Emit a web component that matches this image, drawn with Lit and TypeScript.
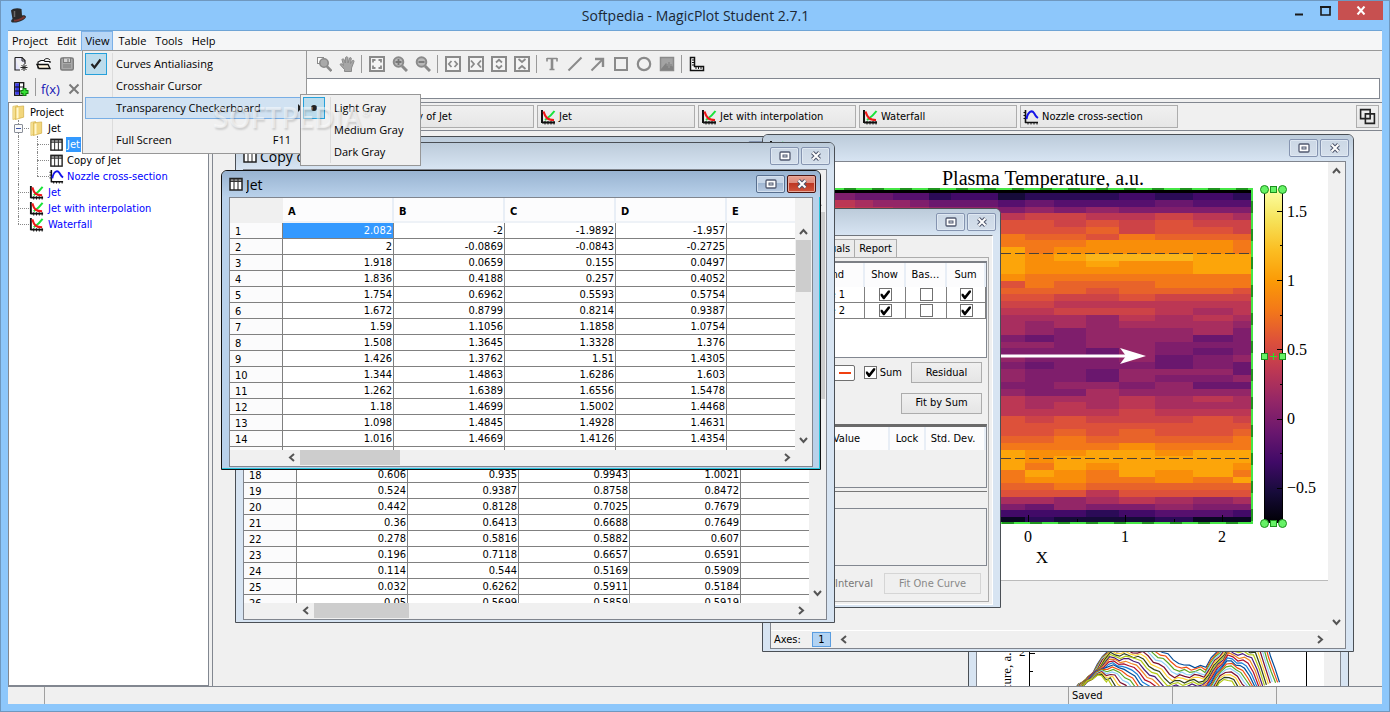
import { LitElement, html, svg, css, nothing, TemplateResult } from "lit";
import { customElement, property } from "lit/decorators.js";
import { styleMap } from "lit/directives/style-map.js";

/* ---------- data ---------- */

const JET_ROWS: string[][] = [
  ["2.082", "-2", "-1.9892", "-1.957"],
  ["2", "-0.0869", "-0.0843", "-0.2725"],
  ["1.918", "0.0659", "0.155", "0.0497"],
  ["1.836", "0.4188", "0.257", "0.4052"],
  ["1.754", "0.6962", "0.5593", "0.5754"],
  ["1.672", "0.8799", "0.8214", "0.9387"],
  ["1.59", "1.1056", "1.1858", "1.0754"],
  ["1.508", "1.3645", "1.3328", "1.376"],
  ["1.426", "1.3762", "1.51", "1.4305"],
  ["1.344", "1.4863", "1.6286", "1.603"],
  ["1.262", "1.6389", "1.6556", "1.5478"],
  ["1.18", "1.4699", "1.5002", "1.4468"],
  ["1.098", "1.4845", "1.4928", "1.4631"],
  ["1.016", "1.4669", "1.4126", "1.4354"],
  ["0.934", "1.3561", "1.3402", "1.3277"],
];

const COPY_ROWS: string[][] = [
  ...JET_ROWS.slice(1),
  ["0.852", "1.2432", "1.2518", "1.2604"],
  ["0.77", "1.1207", "1.1439", "1.1822"],
  ["0.688", "1.0244", "1.0611", "1.0933"],
  ["0.606", "0.935", "0.9943", "1.0021"],
  ["0.524", "0.9387", "0.8758", "0.8472"],
  ["0.442", "0.8128", "0.7025", "0.7679"],
  ["0.36", "0.6413", "0.6688", "0.7649"],
  ["0.278", "0.5816", "0.5882", "0.607"],
  ["0.196", "0.7118", "0.6657", "0.6591"],
  ["0.114", "0.544", "0.5169", "0.5909"],
  ["0.032", "0.6262", "0.5911", "0.5184"],
  ["-0.05", "0.5699", "0.5859", "0.5919"],
];

/* ---------- icons ---------- */

const icon = (body: unknown, size = 16) => html`<svg
  width=${size} height=${size} viewBox="0 0 16 16" aria-hidden="true">${body}</svg>`;

const G = "#8a8a8a";

const tableIcon = () => icon(svg`
  <rect x="2" y="2" width="12" height="12" fill="#fff"/>
  <rect x="2" y="2" width="12" height="3" fill="#8f8f8f"/>
  <path d="M2 5.500H14M6 3V14M10 3V14" stroke="#333" stroke-width="1.1" fill="none"/>
  <rect x="2" y="2.500" width="12" height="11.500" fill="none" stroke="#222" stroke-width="1.500"/>`);

const plotIcon = () => icon(svg`
  <path d="M2 1V14M2 13.5H15" stroke="#111" stroke-width="2" fill="none"/>
  <path d="M5 15.500V12M8 15.500V12M11 15.500V12M14 15.500V12" stroke="#111" stroke-width="1"/>
  <path d="M5 11C8 9 11 7 14.500 2" stroke="#19e33a" stroke-width="2" fill="none"/>
  <path d="M3.500 2.500C5.500 9 7.500 11 14 11" stroke="#f01818" stroke-width="2.2" fill="none"/>`);

const curveIcon = () => icon(svg`
  <path d="M2.500 1V14M2 13.500H15" stroke="#111" stroke-width="1.6" fill="none"/>
  <path d="M0.500 3.500H2M0.500 6.500H2M0.500 9.500H2M5 15.500V13M8 15.500V13M11 15.500V13M14 15.500V13" stroke="#111" stroke-width="1"/>
  <path d="M3.500 10C5 2 9 1 11 4S12.500 7.500 15 9" stroke="#1414e8" stroke-width="2" fill="none"/>`);

const folderIcon = () => icon(svg`
  <path d="M2 1.500L7 .500V14L2 15.500Z" fill="#fbe9a4" stroke="#d8b64c" stroke-width=".7"/>
  <path d="M4.500 2L13.500 1V13L4.500 15.500Z" fill="#f2d67c" stroke="#d0a93c" stroke-width=".7"/>
  <path d="M6 3L8 2.700V14L6 14.500Z" fill="#fff7cf"/>`);

const newIcon = () => icon(svg`
  <path d="M2 1.500H9L12 4.500V8M2 1.500V14H7" fill="#e4e4fa" stroke="#222" stroke-width="1.2"/>
  <path d="M9 1.500V5H12" fill="none" stroke="#222"/>
  <path d="M11 8V15M7.500 11.500H14.500M8.500 9L13.500 14M13.500 9L8.500 14" stroke="#222" stroke-width="1"/>`);

const openIcon = () => icon(svg`
  <path d="M2 12.500V6L5 4.500H8L9 5.500H14V7" fill="#fff" stroke="#111" stroke-width="1.200"/>
  <path d="M8 4C10 2 12 2 14 4" fill="none" stroke="#111"/>
  <path d="M1 8.500H12L14 12.500H3Z" fill="#fff6e0" stroke="#111" stroke-width="1.300"/>`);

const saveIcon = () => icon(svg`
  <rect x="1.700" y="2" width="12.600" height="12" rx="1.500" fill="#a9a9a9" stroke="#7c7c7c" stroke-width="1.400"/>
  <rect x="4.500" y="2" width="7" height="4.500" fill="#d5d5d5" stroke="#7c7c7c"/>
  <path d="M9 3V6M4 9H12M4 11H12" stroke="#7c7c7c" stroke-width="1.200"/>`);

const addColumnIcon = () => icon(svg`
  <rect x="1.700" y="1.700" width="9" height="12.600" fill="#fff" stroke="#111" stroke-width="1.300"/>
  <rect x="2.300" y="2.300" width="3.700" height="11.400" fill="#3838e8"/>
  <path d="M6.500 2V14M2 6H11M2 10H11" stroke="#111"/>
  <path d="M11.500 7V15M7.500 11H15.500" stroke="#117a11" stroke-width="4"/>
  <path d="M11.500 8V14M8.500 11H14.500" stroke="#35e035" stroke-width="2"/>`);

const crossIcon = () => icon(svg`<path d="M3.500 3.500L12.500 12.500M12.500 3.500L3.500 12.500" stroke="#7a7a7a" stroke-width="2"/>`);

const loupe = (mark: unknown) => svg`
  <circle cx="6.500" cy="6" r="4.800" fill="#b9b9b9" stroke="${G}" stroke-width="2"/>
  <path d="M10 10L15 15" stroke="${G}" stroke-width="3"/>${mark}`;

const frame = (d: string) => icon(svg`
  <rect x="1" y="1" width="14" height="14" fill="#f4f4f4" stroke="${G}" stroke-width="2"/>
  <path d="${d}" fill="none" stroke="${G}" stroke-width="1.800"/>`);

const TOOLS: Array<[string, TemplateResult] | null> = [
  ["Zoom region", icon(svg`
    <rect x="1.500" y="1.500" width="6" height="6" fill="#fff" stroke="${G}"/>
    <circle cx="8" cy="7" r="4.200" fill="#a9a9a9" stroke="${G}" stroke-width="1.600"/>
    <path d="M11 10.500L15.500 15" stroke="${G}" stroke-width="2.600"/>`)],
  ["Pan", icon(svg`
    <path d="M1 8.500C2 7 3.500 8 4.500 9.500L3 3.500C3.500 2.500 4.700 2.600 5 3.500L6.300 7L6.500 1.500C7 .500 8.500 .500 8.800 1.500L9 7L10.500 2C11 1.200 12.300 1.500 12.300 2.500L11.500 7.500L13.500 4.500C14.200 4 15.300 4.500 15 5.500L12.500 12V15.500H5.500V13.500Z" fill="#a6a6a6" stroke="${G}"/>`)],
  null,
  ["Fit all", frame("M4 6.500V4H6.500M9.500 4H12V6.500M12 9.500V12H9.500M6.500 12H4V9.500")],
  ["Zoom in", icon(loupe(svg`<path d="M3.500 6H9.500M6.500 3V9" stroke="#777" stroke-width="1.800"/>`))],
  ["Zoom out", icon(loupe(svg`<path d="M3.500 6H9.500" stroke="#777" stroke-width="1.800"/>`))],
  null,
  ["Expand horizontally", frame("M6.500 5L3.800 8L6.500 11M9.500 5L12.200 8L9.500 11")],
  ["Shrink horizontally", frame("M3 4.500L6 8L3 11.500M13 4.500L10 8L13 11.500")],
  ["Expand vertically", frame("M5 6.500L8 3.800L11 6.500M5 9.500L8 12.200L11 9.500")],
  ["Shrink vertically", frame("M4.500 3L8 6L11.500 3M4.500 13L8 10L11.500 13")],
  null,
  ["Text", icon(svg`<path d="M3 2.500H13M3 2V5.500M13 2V5.500M5.500 13.500H10.500" stroke="${G}" stroke-width="1.600" fill="none"/><path d="M8 2V14" stroke="${G}" stroke-width="2.600"/>`)],
  ["Line", icon(svg`<path d="M1.500 14.500L14.500 1.500" stroke="${G}" stroke-width="2"/>`)],
  ["Arrow", icon(svg`<path d="M1.500 14.500L12 4" stroke="${G}" stroke-width="2"/><path d="M5 3H13V11" stroke="${G}" stroke-width="2.400" fill="none"/>`)],
  ["Rectangle", icon(svg`<rect x="2" y="2" width="12" height="12" fill="none" stroke="${G}" stroke-width="2"/>`)],
  ["Ellipse", icon(svg`<circle cx="8" cy="8" r="6.200" fill="none" stroke="${G}" stroke-width="2.200"/>`)],
  ["Image", icon(svg`
    <rect x="1.500" y="1.500" width="13" height="13" fill="#a3a3a3" stroke="${G}" stroke-width="1.500"/>
    <path d="M2 13L7 7L10 10L12 8L14 11V14H2Z" fill="#828282"/>
    <path d="M10 6V12M7.500 9H13" stroke="#909090" stroke-width="2"/>`)],
  null,
  ["Axes", icon(svg`
    <path d="M1.500 1.500H5.500V10.500H14.500V14.500H1.500Z" fill="#fff" stroke="#111" stroke-width="1.500"/>
    <path d="M3 4H5M3 6.500H5M3 9H5M7 11V13M9.500 11V13M12 11V13" stroke="#111"/>`)],
];

type Dir = "up" | "down" | "left" | "right";
const CHEVRONS: Record<Dir, string> = {
  up: "M1 7L4.500 3L8 7",
  down: "M1 2L4.500 6L8 2",
  left: "M7 1L3 4.500L7 8",
  right: "M2 1L6 4.500L2 8",
};
const chevron = (d: Dir) => html`<svg width="9" height="9" viewBox="0 0 9 9" aria-hidden="true">
  <path d=${CHEVRONS[d]} fill="none" stroke="#555" stroke-width="2"/></svg>`;

const base = css`
  :host {
    --ui: "DejaVu Sans Condensed", "Noto Sans", sans-serif;
    --menu: "Open Sans", "Noto Sans", sans-serif;
    font: 11px/16px var(--ui);
    color: #000;
  }
  * { box-sizing: border-box; }
  button, input { font: inherit; color: inherit; margin: 0; }
  svg { display: block; flex: none; }
`;

/* ---------- document window ---------- */

@customElement("mdi-window")
class MdiWindow extends LitElement {
  @property() heading = "";
  @property({ attribute: false }) glyph: TemplateResult | typeof nothing = nothing;
  @property({ type: Boolean, reflect: true }) active = false;
  @property({ type: Boolean, reflect: true }) plain = false;

  static styles = [base, css`
    :host {
      display: flex; flex-direction: column;
      border: 1px solid #4a4f55; border-radius: 6px 6px 0 0;
      background: #d7e4f2; padding: 0 7px 2px; overflow: hidden;
    }
    :host([active]) { border-color: #111; background: #b9d1ea; box-shadow: inset -1px -1px #29c4dc; }
    header {
      display: flex; align-items: center; gap: 2px; flex: none;
      height: 26px; margin: 0 -7px; padding: 0 4px 0 6px;
      background: linear-gradient(#bccbda, #d7e4f2);
    }
    :host([active]) header { background: linear-gradient(#98b3d1, #b9d1ea); }
    h2 { flex: 1; margin: 0; padding-top: 1px; font: 14px/20px var(--menu); white-space: nowrap; overflow: hidden; }
    .buttons { display: flex; gap: 2px; }
    button {
      display: grid; place-items: center; width: 29px; height: 18px; padding: 0;
      border: 1px solid #8594b0; border-radius: 2px;
      background: linear-gradient(#cbd7e5, #d5dfeb);
      box-shadow: inset 0 0 0 1px #dfe8f2;
    }
    :host([active]) button { border-color: #586f8f; background: linear-gradient(#c7d6e8 0 45%, #9fb6d2 45%, #b9cbe2); box-shadow: inset 0 0 0 1px #d5e1ef; }
    :host([active]) .close { border-color: #4b1410; background: linear-gradient(#e5a091, #dd8a7b 45%, #bd3622 45%, #d0553c); box-shadow: inset 0 0 0 1px #e8a99b; }
    .content { flex: 1; min-height: 0; display: flex; flex-direction: column; border: 1px solid #80858e; background: #f0f0f0; overflow: hidden; }
    :host([plain]) .content { border-color: #70757c #fff #fff #70757c; }
  `];

  render() {
    return html`
      <header>
        ${this.glyph}<h2>${this.heading}</h2>
        <div class="buttons">
          <button aria-label="Maximize">
            <svg width="12" height="10" viewBox="0 0 12 10">
              <rect x="1" y="1" width="10" height="8" rx="1" fill="#fff" stroke="#525a70" stroke-width="1.300"/>
              <rect x="4" y="4" width="4" height="2" fill="#dde3ea" stroke="#525a70"/>
            </svg>
          </button>
          <button class="close" aria-label="Close">
            <svg width="12" height="10" viewBox="0 0 12 10">
              <path d="M2.500 1.500L9.500 8.500M9.500 1.500L2.500 8.500" stroke="#4d556b" stroke-width="4"/>
              <path d="M2.500 1.500L9.500 8.500M9.500 1.500L2.500 8.500" stroke="#fff" stroke-width="2"/>
            </svg>
          </button>
        </div>
      </header>
      <div class="content"><slot></slot></div>`;
  }
}

/* ---------- spreadsheet ---------- */

@customElement("data-sheet")
class DataSheet extends LitElement {
  @property({ attribute: false }) rows: string[][] = [];
  @property({ type: Boolean }) selectFirst = false;
  @property({ type: Number }) vThumb = 52;
  @property({ type: Number }) hThumb = 100;

  static styles = [base, css`
    :host { flex: 1; min-height: 0; display: grid; grid-template: minmax(0, 1fr) 16px / minmax(0, 1fr) 17px; }
    .view { overflow: hidden; background: #fff; }
    table { width: 100%; table-layout: fixed; border-collapse: separate; border-spacing: 0; }
    .num { width: 53px; }
    .col { width: 111px; }
    thead th {
      height: 25px; padding: 4px 5px 0; text-align: left; font-weight: bold;
      background: #fcfcfd; border-right: 2px solid #e8eef6; border-bottom: 2px solid #eef2f7;
    }
    thead th:first-child { background: #f0f0f0; border-color: #f0f0f0; }
    thead th:last-child { border-right: 0; }
    tbody th, td { height: 16px; padding: 0 1px; line-height: 15px; border: solid #808080; border-width: 0 1px 1px 0; }
    tbody th { padding: 2px 5px 0; line-height: 13px; text-align: left; font-weight: normal; background: #fbfbfc; }
    td { text-align: right; }
    td:last-child { border-right: 0; }
    td.sel { background: #3399ff; color: #fff; }
    .v { display: flex; flex-direction: column; align-items: center; padding: 29px 0 5px; }
    .h { display: flex; align-items: center; padding: 0 3px 1px 57px; }
    .thumb { background: #cdcdcd; }
    .v .thumb { width: 15px; margin-top: 4px; }
    .h .thumb { height: 15px; margin-left: 4px; }
    .fill { flex: 1; }
  `];

  render() {
    return html`
      <div class="view">
        <table>
          <colgroup><col class="num"><col class="col"><col class="col"><col class="col"><col class="col"><col></colgroup>
          <thead><tr><th></th>${["A", "B", "C", "D", "E"].map((c) => html`<th scope="col">${c}</th>`)}</tr></thead>
          <tbody>
            ${this.rows.map((r, i) => html`<tr>
              <th scope="row">${i + 1}</th>
              ${r.map((v, j) => html`<td class=${this.selectFirst && i + j === 0 ? "sel" : ""}>${v}</td>`)}
              <td></td>
            </tr>`)}
          </tbody>
        </table>
      </div>
      <div class="v">
        ${chevron("up")}
        <div class="thumb" style=${styleMap({ height: `${this.vThumb}px` })}></div>
        <div class="fill"></div>${chevron("down")}
      </div>
      <div class="h">
        ${chevron("left")}
        <div class="thumb" style=${styleMap({ width: `${this.hThumb}px` })}></div>
        <div class="fill"></div>${chevron("right")}
      </div>
      <div></div>`;
  }
}

/* ---------- heat map ---------- */

/* Colour scale, one letter per step of 0.05: a is 0, r is 0.85. */
const INFERNO = [
  "#000004", "#0a0722", "#160b39", "#2b0b57", "#420a68", "#56106e", "#6a176e", "#7f1e6c",
  "#932667", "#a82e5f", "#bc3754", "#cd4347", "#dd513a", "#e8632a", "#f37819", "#f98e09",
  "#fca50a", "#fbb61a",
];
const X_EDGES = [834, 855, 873, 893, 910, 929, 951, 972, 998, 1025, 1054, 1086, 1119, 1155, 1193, 1233, 1252];
const HEAT = [
  "hggffdeecdddeded", "kjiihgggfgfffgff", "lkkjjiiihihihhhh",
  "llllkkkkkllkklkj", "llllkkkkmmlmlmll", "nnnnnnnnmmmnlmml", "ooooooooonnmonnn",
  "oooooooooooppppo", "ooooooooqopppppo", "ooooooooqpqrrrqq", "ooooooooqppqppqq",
  "ooooooooqpppppqq", "oooooooopooooooo", "oooooooomonnnooo", "nnnnnnnnnnnmnnnm",
  "mmmmmmmmmmllmlll", "llllllllllkkkkkk", "kkkkkkkkkklllkjk", "jjjjjjjjjjjikjkj",
  "jjjjjjjjjijijjji", "iiiiiiiijihiiijh", "iiiiiiiihghiiigh", "hhhhhhhhiihiihhh",
  "hhhhhhhhhhhgihgh", "hhhhhhhhihhhighi", "hhhhhhhhhghhhghg", "iiiiiiiiihhgiiig",
  "iiiiiiiiihhgihhi", "hhhhhhhhhhiihigg", "iiiiiiiiihhjiiii", "kkkkkkkkkjjjkjkj",
  "kkkkkkkkkjkjkjjj", "kkkkkkkkkkkklkkk", "mmmmmmmmmlmlllml", "mmmmmmmmmmmmmmmm",
  "mmmmmmmmmmnmnmmn", "oooooooonnonnnno", "oooooooooooopooo", "ooooooooqppqqpqq",
  "ooooooooqpqqqqqq", "ooooooooqoqpqqqp", "oooooooooqpoqpqo", "oooooooooppoopoq",
  "oooooooonnonnnnn", "mmmmmmmmmmmkmmmm", "kkkkkkkkjjijkjij", "hhhhhhhhhgihhihh",
  "ffffffffeeedeffe", "ccccccccbdcccdbb",
];
const ROW_TOP = 193;
const ROW_STEP = 6.75;

const heatCells = () => HEAT.map((line, r) => {
  const y0 = Math.round(ROW_TOP + r * ROW_STEP);
  const y1 = Math.round(ROW_TOP + (r + 1) * ROW_STEP);
  return [...line].map((ch, c) => svg`<rect
    x=${X_EDGES[c]} y=${y0} width=${X_EDGES[c + 1] - X_EDGES[c]} height=${y1 - y0}
    fill=${INFERNO[ch.charCodeAt(0) - 97]}/>`);
});

const plasmaPlot = () => html`
  <svg class="plot" viewBox="771 162 557 418" width="557" height="418" role="img" aria-label="Plasma Temperature">
    <defs>
      <linearGradient id="inferno" x1="0" y1="0" x2="0" y2="1">
        ${["#fcffa4", "#f6e35a", "#fbbe23", "#fb9b06", "#f37819", "#dd513a", "#bc3754", "#932667", "#6a176e", "#400a67", "#160b39", "#000004"]
          .map((c, i) => svg`<stop offset=${i / 11} stop-color=${c}/>`)}
      </linearGradient>
    </defs>
    <rect x="771" y="162" width="557" height="418" fill="#fff"/>
    <text x="1043" y="185" font-size="20" text-anchor="middle">Plasma Temperature, a.u.</text>
    <g shape-rendering="crispEdges">
      <rect x="800" y="190" width="452" height="332" fill="#000"/>
      ${heatCells()}
      <path d="M1028 515V522M1125 515V522M1222 515V522M1077 519V522M1174 519V522" stroke="#000"/>
      <path d="M1001 253.500H1250M1001 458.500H1250" stroke="#4a4038" stroke-dasharray="10 4"/>
      <path d="M800 189H1252V523H800" fill="none" stroke="#1f951f" stroke-width="2"/>
      <path d="M800 189H1252V523H800" fill="none" stroke="#46e646" stroke-width="2" stroke-dasharray="16 12"/>
      <rect x="1264" y="189" width="19" height="334" fill="url(#inferno)" stroke="none"/>
      <path d="M1264.500 189V523M1282.500 189V523M1277 211.500H1283M1277 280.500H1283M1277 349.500H1283M1277 419.500H1283M1277 488.500H1283
        M1280 245.500H1283M1280 315.500H1283M1280 384.500H1283M1280 453.500H1283" stroke="#000" fill="none"/>
    </g>
    <path d="M1001 356H1130" stroke="#fff" stroke-width="3"/>
    <path d="M1146 356L1120 348L1126 356L1120 364Z" fill="#fff"/>
    <g fill="#66f266" stroke="#1d8f1d" stroke-width="1">
      <circle cx="1264.500" cy="189.500" r="4"/><circle cx="1282.500" cy="189.500" r="4"/>
      <circle cx="1264.500" cy="523.500" r="4"/><circle cx="1282.500" cy="523.500" r="4"/>
      <rect x="1270.500" y="186.500" width="6" height="6"/><rect x="1270.500" y="520.500" width="6" height="6"/>
      <rect x="1261.500" y="353.500" width="6" height="6"/><rect x="1279.500" y="353.500" width="6" height="6"/>
      <path d="M1270 356.500H1277M1273.500 353V360" stroke="#26e626"/>
    </g>
    <g font-size="16">
      <text x="1287" y="217">1.5</text><text x="1287" y="286">1</text><text x="1287" y="355">0.5</text>
      <text x="1287" y="424">0</text><text x="1287" y="493">−0.5</text>
      <g text-anchor="middle"><text x="1028" y="542">0</text><text x="1125" y="542">1</text><text x="1222" y="542">2</text></g>
      <text x="1042" y="563" font-size="17" text-anchor="middle">X</text>
    </g>
  </svg>`;

/* ---------- waterfall curves ---------- */

const PALETTE = ["#004c99", "#f04e12", "#5aa822", "#8fd0f8", "#7a1030", "#ffd43a", "#2f3f1c", "#b5cc18", "#4a1c78", "#f08a24", "#b00f2a", "#1a7fd6"];
const CURVES = 20;

const curve = (i: number) => {
  const t = i / (CURVES - 1);
  const knots = [
    [1074 + 8 * t, 690 - 3 * t], [1092 + 6 * t, 673], [1113 - 8 * t, 642 + 38 * t], [1152 - 44 * t, 645 + 36 * t],
    [1184 - 44 * t, 666 + 50 * t], [1206 - 8 * t, 666 + 46 * t], [1232 - 8 * t, 632 + 46 * t],
    [1266 - 34 * t, 640 + 42 * t], [1284 - 38 * t, 698],
  ];
  const pts: string[] = [];
  for (let k = 0; k < knots.length - 1; k++) {
    const [x0, y0] = knots[k];
    const [x1, y1] = knots[k + 1];
    const n = Math.max(2, Math.round((x1 - x0) / 5));
    for (let s = 0; s < n; s++) {
      const f = s / n;
      const wobble = Math.sin(i * 12.9 + k * 7.7 + s * 4.3) * 1.8;
      pts.push(`${(x0 + (x1 - x0) * f).toFixed(1)},${(y0 + (y1 - y0) * f + wobble).toFixed(1)}`);
    }
  }
  return svg`<polyline points=${pts.join(" ")} fill="none" stroke=${PALETTE[i % PALETTE.length]} stroke-width="1.200"/>`;
};

const waterfallPlot = () => html`
  <svg class="plot" viewBox="977 198 347 500" width="347" height="500" role="img" aria-label="Waterfall">
    <rect x="977" y="198" width="347" height="500" fill="#fff"/>
    ${Array.from({ length: CURVES }, (_, i) => curve(i))}
    <path d="M1029.500 260V698M1306.500 260V698M1030 653.500H1035M1030 671.500H1033" stroke="#000" fill="none" shape-rendering="crispEdges"/>
    <text x="1019" y="656" font-size="13">2</text>
    <text transform="translate(1011 774) rotate(-90)" font-size="13">Plasma Temperature, a.u.</text>
  </svg>`;

/* ---------- shell ---------- */

const check = (label: string, on: boolean) =>
  html`<input type="checkbox" aria-label=${label} .checked=${on}>`;

interface TreeRow { depth: number; text: string; glyph: () => TemplateResult; kind?: string; }
const TREE: TreeRow[] = [
  { depth: 0, text: "Project", glyph: folderIcon },
  { depth: 1, text: "Jet", glyph: folderIcon, kind: "branch" },
  { depth: 2, text: "Jet", glyph: tableIcon, kind: "selected" },
  { depth: 2, text: "Copy of Jet", glyph: tableIcon },
  { depth: 2, text: "Nozzle cross-section", glyph: curveIcon, kind: "blue tail" },
  { depth: 1, text: "Jet", glyph: plotIcon, kind: "blue" },
  { depth: 1, text: "Jet with interpolation", glyph: plotIcon, kind: "blue" },
  { depth: 1, text: "Waterfall", glyph: plotIcon, kind: "blue last" },
];

const TABS: [string, () => TemplateResult][] = [
  ["Jet", tableIcon], ["Copy of Jet", tableIcon], ["Jet", plotIcon],
  ["Jet with interpolation", plotIcon], ["Waterfall", plotIcon], ["Nozzle cross-section", curveIcon],
];

const place = (x: number, y: number, w: number, h: number) =>
  styleMap({ left: `${x}px`, top: `${y}px`, width: `${w}px`, height: `${h}px` });

@customElement("app-root")
class AppRoot extends LitElement {
  static styles = [base, css`
    :host {
      display: flex; flex-direction: column; height: 100vh; overflow: hidden;
      border: 1px solid #6f98bf; background: #8dc7fb; padding: 0 7px 7px; box-sizing: border-box;
    }
    .caption { display: grid; grid-template-columns: 1fr auto 1fr; height: 29px; flex: none; margin-right: -1px; }
    .caption h1 { margin: 0; font: 14px/29px var(--menu); color: #1c2733; }
    .caption .sys { display: flex; justify-content: flex-end; align-items: flex-start; }
    .caption button { width: 26px; height: 19px; padding: 0; border: 0; background: none; display: grid; place-items: center; color: #1a1a1a; }
    .caption button.quit { width: 45px; background: #c75050; color: #fff; }
    .client { flex: 1; min-height: 0; display: flex; flex-direction: column; background: #f0f0f0; border: solid #6fa5d6; border-width: 1px 0 0; }

    nav { display: flex; gap: 1px; height: 20px; flex: none; background: #f5f6f7; border-bottom: 1px solid #999; font: 11px/18px var(--menu); }
    nav button { padding: 0 4px; border: 1px solid transparent; border-width: 1px 0; background: none; height: 20px; line-height: 18px; }
    nav button.open { padding: 0 3px; border-width: 1px; background: #b8d6f5; border-color: #7ab0e8; }

    .tools { display: flex; height: 26px; align-items: center; flex: none; padding-left: 1px; }
    .tools.second { height: 25px; align-items: flex-start; padding: 1px 2px 0 1px; }
    .tools button { width: 23px; height: 22px; padding: 0; border: 0; background: none; display: grid; place-items: center; flex: none; }
    .tools button.fx { color: #1414b4; font: 13px/20px var(--menu); }
    .sep { width: 1px; height: 18px; margin: 0 3px; background: #999; flex: none; }
    .wide { flex: 0 0 234px; }
    .formula { flex: 1; min-width: 0; height: 21px; margin-left: 20px; border: 1px solid #828790; background: #fff; }

    .work { flex: 1; min-height: 0; display: flex; gap: 3px; }
    .tree { width: 201px; flex: none; margin: 0; padding: 1px 0 0 2px; list-style: none; background: #fff; border: 1px solid #828790; }
    .tree li { display: flex; align-items: center; gap: 2px; height: 16px; position: relative; white-space: nowrap; }
    .d1 { padding-left: 18px; }
    .d2 { padding-left: 38px; }
    .tree li::after { content: ""; position: absolute; height: 8px; border: dotted #888; border-width: 0 0 1px; top: 0; }
    .tree li.d0::after { display: none; }
    .tree li.d1::after { left: 7px; width: 11px; }
    .tree li.d2::after { left: 26px; width: 12px; }
    .guide { position: absolute; left: 7px; top: 0; height: 16px; border-left: 1px dotted #888; }
    .guide.inner { left: 26px; }
    .last .guide, .tail .guide.inner { height: 8px; }
    .expander { position: absolute; left: 3px; top: 4px; width: 9px; height: 9px; padding: 0; border: 1px solid #8a8f98; border-radius: 1px; background: linear-gradient(#3c55a8, #3c55a8) center / 5px 1px no-repeat #fafafa; z-index: 1; }
    .tree a { color: #000; text-decoration: none; padding: 0 1px; line-height: 15px; }
    .tree svg { width: 15px; height: 15px; }
    .d0 a, .d1 a { margin-left: 1px; }
    .tree .blue a { color: #0000ff; }
    .tree .selected a { color: #fff; background: #3399ff; }

    .desk { flex: 1; min-width: 0; display: flex; flex-direction: column; border: solid #828790; border-width: 1px 0 0 1px; }
    .tabs { display: flex; gap: 3px; height: 28px; flex: none; padding: 2px 3px 3px 2px; border-bottom: 1px solid #828790; }
    .tabs button { width: 158px; height: 23px; display: flex; align-items: center; gap: 3px; padding: 0 2px; border: 1px solid #adadad; background: linear-gradient(#f0f0f0, #e6e6e6); white-space: nowrap; }
    .tabs button.cascade { width: 23px; margin-left: auto; }
    .canvas { flex: 1; min-height: 0; position: relative; overflow: hidden; }
    mdi-window { position: absolute; }

    .plot { font-family: "Liberation Serif", serif; }
    .scroller { flex: 1; min-height: 0; display: grid; grid-template-columns: minmax(0, 1fr) 17px; }
    .sheet { overflow: hidden; border-bottom: 1px solid #fff; }
    .paper { border-bottom: 1px solid #bbb; background: #fff; }
    .vbar { display: flex; flex-direction: column; justify-content: space-between; align-items: center; padding: 4px 0; }
    .axes { display: flex; align-items: center; height: 17px; flex: none; padding: 0 20px 0 3px; }
    .axes button { width: 19px; height: 15px; padding: 0; margin: 0 8px 0 11px; border: 1px solid #5a9de0; background: #b2d3f3; line-height: 13px; }
    .axes .fill { flex: 1; }

    .fit { flex: 1; display: flex; flex-direction: column; padding: 3px 2px 2px 0; background: #f0f0f0; }
    .fit-tabs { display: flex; justify-content: flex-end; padding-right: 94px; height: 18px; }
    .fit-tabs button { padding: 0 4px; border: 1px solid #acacac; border-bottom: 0; background: #ececec; line-height: 16px; margin-right: -1px; }
    .fit-tabs .on { background: #f0f0f0; }
    .panel { flex: 1; display: flex; flex-direction: column; margin-right: 1px; padding: 3px 1px 5px 0; border: 1px solid #acacac; border-left: 0; }
    .box { height: 97px; background: #fff; border: 1px solid #828790; border-top: 2px solid #7c7f85; }
    .box table { width: 100%; table-layout: fixed; border-collapse: separate; border-spacing: 0; }
    .box th { height: 24px; padding: 0; font-weight: normal; background: #fcfcfd; border-right: 2px solid #e8eef6; }
    .box td { height: 16px; padding: 0; text-align: center; border: solid #808080; border-width: 0 1px 1px 0; line-height: 13px; }
    .box .r { text-align: right; padding-right: 19px; }
    .box .v { text-align: right; padding-right: 28px; }
    .c39 { width: 39px; } .c41 { width: 41px; } .c35 { width: 36px; } .c60 { width: 60px; }
    .params .dev { padding-right: 4px; }
    input[type="checkbox"] { appearance: none; width: 13px; height: 13px; border: 1px solid #707070; background: #fff; vertical-align: middle; display: inline-block; position: relative; }
    input[type="checkbox"]:checked::before { content: ""; display: block; width: 11px; height: 11px; background: #000; clip-path: polygon(10% 42%, 25% 42%, 40% 60%, 78% 12%, 95% 12%, 95% 28%, 45% 90%, 33% 90%, 10% 60%); }
    .row { display: flex; justify-content: flex-end; align-items: center; padding-right: 5px; }
    .row.first { margin-top: 4px; gap: 9px; }
    .row.second { margin-top: 9px; height: 22px; }
    .row label { display: flex; align-items: center; gap: 3px; }
    .row button { height: 21px; border: 1px solid #acacac; background: linear-gradient(#f0f0f0, #e5e5e5); padding: 0; }
    .w71 { width: 71px; } .w81 { width: 81px; } .w97 { width: 97px; }
    .row button:disabled { color: #888; border-color: #d5d5d5; background: #efefef; }
    .swatch { width: 70px; height: 16px; border: 1px solid #707070; border-radius: 2px; background: linear-gradient(#f04010, #f04010) 53px 6px / 12px 2px no-repeat #fff; }
    .params { height: 64px; margin-top: 10px; background: #f0f0f0; border: 1px solid #828790; border-top: 3px solid #6a6a6a; }
    .params th { height: 23px; }
    .rule { height: 1px; margin: 3px 0 16px; background: #777; }
    .notes { height: 58px; border: 1px solid #828790; }
    .row.last { margin-top: 7px; gap: 11px; color: #777; padding-right: 6px; }

    .status { display: flex; height: 18px; flex: none; border-top: 1px solid #828790; line-height: 17px; }
    .status span { border-left: 1px solid #a0a0a0; padding-left: 3px; width: 104px; }
    .status .a { width: 36px; border: 0; }
    .status .b { flex: 1; }
    .status span:last-child { width: 106px; }

    .menu { position: absolute; z-index: 5; margin: 0; padding: 2px; background: #f0f0f0; border: 1px solid #979797; font: 11px/20px var(--menu); display: flex; flex-direction: column; }
    .menu button { display: flex; align-items: center; width: 100%; height: 22px; padding: 0; border: 1px solid transparent; background: none; text-align: left; white-space: nowrap; line-height: 20px; }
    .menu .mark { width: 22px; height: 22px; margin: 0 9px 0 -1px; flex: none; display: grid; place-items: center; border: 1px solid transparent; }
    .menu .mark.on { border-color: #26a0da; background: #bcdcec; }
    .menu button.hot { border-color: #78aee5; background: #d1e2f2; }
    .menu .text { flex: 1; }
    .main { left: 82px; top: 50px; width: 225px; height: 104px; background: linear-gradient(#dcdcdc, #dcdcdc) 29px 2px / 1px 98px no-repeat #f0f0f0; }
    .main hr { width: 190px; height: 1px; margin: 4px 0 6px auto; border: 0; background: #d0d0d0; }
    .main .key { margin-right: 12px; }
    .sub { left: 300px; top: 94px; width: 121px; height: 72px; background: linear-gradient(#dcdcdc, #dcdcdc) 29px 2px / 1px 66px no-repeat #f0f0f0; }
    .watermark { position: absolute; z-index: 6; left: 213px; top: 101px; font: 600 28px/32px "Open Sans", sans-serif; color: rgba(255, 255, 255, .5); text-shadow: 1px 2px 2px rgba(0, 0, 0, .14); pointer-events: none; }
    .watermark sup { font-size: 10px; line-height: 10px; vertical-align: 12px; }
    .hat { padding: 5px 0 0 1px; }
  `];

  private tree() {
    return html`<ul class="tree" role="tree">
      ${TREE.map((r) => html`<li role="treeitem" class="d${r.depth} ${r.kind ?? ""}">
        ${r.depth ? html`<span class="guide"></span>` : nothing}
        ${r.depth === 2 ? html`<span class="guide inner"></span>` : nothing}
        ${r.kind === "branch" ? html`<button class="expander" aria-label="Collapse"></button>` : nothing}
        ${r.glyph()}<a href="#">${r.text}</a>
      </li>`)}
    </ul>`;
  }

  private fitPanel() {
    return html`<div class="fit">
      <div class="fit-tabs"><button class="on">Fit Curves</button><button>Residuals</button><button>Report</button></div>
      <div class="panel">
        <div class="box">
          <table>
            <colgroup><col><col class="c41"><col class="c41"><col class="c39"></colgroup>
            <thead><tr><th class="r">Legend</th><th>Show</th><th>Bas…</th><th>Sum</th></tr></thead>
            <tbody>${[1, 2].map((n) => html`<tr>
              <td class="r">Curve ${n}</td><td>${check("Show", true)}</td>
              <td>${check("Baseline", false)}</td><td>${check("Sum", true)}</td></tr>`)}</tbody>
          </table>
        </div>
        <div class="row first">
          <div class="swatch"></div>
          <label><input type="checkbox" checked>Sum</label>
          <button class="w71">Residual</button>
        </div>
        <div class="row second"><button class="w81">Fit by Sum</button></div>
        <div class="box params">
          <table>
            <colgroup><col><col class="c35"><col class="c60"></colgroup>
            <thead><tr><th class="v">Value</th><th>Lock</th><th class="dev">Std. Dev.</th></tr></thead>
          </table>
        </div>
        <div class="rule"></div>
        <div class="notes"></div>
        <div class="row last"><span>Fit Interval</span><button class="w97" disabled>Fit One Curve</button></div>
      </div>
    </div>`;
  }

  private windows() {
    return html`
      <mdi-window style=${place(755, 39, 381, 560)} heading="Waterfall" .glyph=${plotIcon()}>
        <div class="scroller">${waterfallPlot()}<div class="vbar"></div></div>
      </mdi-window>
      <mdi-window style=${place(60, 5, 540, 460)} heading="Nozzle cross-section" .glyph=${curveIcon()}></mdi-window>
      <mdi-window style=${place(549, 3, 592, 518)} heading="" .glyph=${plotIcon()}>
        <div class="scroller">
          <div class="sheet"><div class="paper">${plasmaPlot()}</div></div>
          <div class="vbar">${chevron("up")}${chevron("down")}</div>
        </div>
        <div class="axes">Axes:<button>1</button>${chevron("left")}<span class="fill"></span>${chevron("right")}</div>
      </mdi-window>
      <mdi-window plain style=${place(427, 77, 361, 400)} heading="Fit" .glyph=${curveIcon()}>${this.fitPanel()}</mdi-window>
      <mdi-window style=${place(22, 11, 600, 481)} heading="Copy of Jet" .glyph=${tableIcon()}>
        <data-sheet .rows=${COPY_ROWS} .vThumb=${187} .hThumb=${95}></data-sheet>
      </mdi-window>
      <mdi-window active style=${place(8, 39, 600, 300)} heading="Jet" .glyph=${tableIcon()}>
        <data-sheet .rows=${JET_ROWS} .selectFirst=${true} .vThumb=${52} .hThumb=${100}></data-sheet>
      </mdi-window>`;
  }

  private menus() {
    const tick = svg`<path d="M3.500 8L6.500 11.500L12.500 3.500" fill="none" stroke="#222" stroke-width="2.200"/>`;
    return html`
      <div class="menu main" role="menu">
        <button role="menuitemcheckbox" aria-checked="true"><span class="mark on">${icon(tick)}</span>Curves Antialiasing</button>
        <button role="menuitemcheckbox" aria-checked="false"><span class="mark"></span>Crosshair Cursor</button>
        <button class="hot" role="menuitem"><span class="mark"></span><span class="text">Transparency Checkerboard</span>
          <svg width="6" height="8" viewBox="0 0 6 8"><path d="M1 0L5 4L1 8Z" fill="#222"/></svg></button>
        <hr>
        <button role="menuitem"><span class="mark"></span><span class="text">Full Screen</span><span class="key">F11</span></button>
      </div>
      <div class="menu sub" role="menu">
        <button role="menuitemradio" aria-checked="true"><span class="mark on">${icon(svg`<circle cx="8" cy="8" r="3" fill="#222"/>`)}</span>Light Gray</button>
        <button role="menuitemradio" aria-checked="false"><span class="mark"></span>Medium Gray</button>
        <button role="menuitemradio" aria-checked="false"><span class="mark"></span>Dark Gray</button>
      </div>
      <div class="watermark">SOFTPEDIA<sup>®</sup></div>`;
  }

  render() {
    return html`
      <div class="caption">
        <div class="hat">
          <svg width="18" height="18" viewBox="0 0 18 18" aria-hidden="true">
            <path d="M2 4.500C4 2 9 1.500 12.500 3L13 9.500C15 9 17 9.500 17 11C16 14 9 17 4.500 16.500C1.500 16.500 1.500 14.500 3.500 13Z" fill="#2b2b2b"/>
            <path d="M5 14.500C8 15 13 13 15.500 10.800" stroke="#7a3430" stroke-width="1.800" fill="none"/>
            <path d="M5.500 5V11" stroke="#6b6b6b" stroke-width="1.500"/>
          </svg>
        </div>
        <h1>Softpedia - MagicPlot Student 2.7.1</h1>
        <div class="sys">
          <button aria-label="Minimize"><svg width="11" height="11"><path d="M1 9.500H9" stroke="currentColor" stroke-width="2"/></svg></button>
          <button aria-label="Maximize"><svg width="11" height="11"><path d="M1 2H10V10H1Z" fill="none" stroke="currentColor" stroke-width="1.600"/><path d="M0 2H11" stroke="currentColor" stroke-width="2"/></svg></button>
          <button class="quit" aria-label="Close"><svg width="10" height="9" viewBox="0 0 10 9"><path d="M1.500 .500L8.500 8.500M8.500 .500L1.500 8.500" stroke="currentColor" stroke-width="2"/></svg></button>
        </div>
      </div>
      <div class="client">
        <nav>${["Project", "Edit", "View", "Table", "Tools", "Help"].map((m) => html`<button class=${m === "View" ? "open" : ""}>${m}</button>`)}</nav>
        <div class="tools">
          <button aria-label="New">${newIcon()}</button><button aria-label="Open">${openIcon()}</button><button aria-label="Save">${saveIcon()}</button>
          <span class="wide"></span>
          ${TOOLS.map((t) => t ? html`<button aria-label=${t[0]}>${t[1]}</button>` : html`<span class="sep"></span>`)}
        </div>
        <div class="tools second">
          <button aria-label="Add column">${addColumnIcon()}</button><span class="sep"></span>
          <button class="fx">f(x)</button><button aria-label="Clear">${crossIcon()}</button>
          <input class="formula" type="text" aria-label="Formula">
        </div>
        <div class="work">
          ${this.tree()}
          <div class="desk">
            <div class="tabs">
              ${TABS.map(([text, glyph]) => html`<button>${glyph()}${text}</button>`)}
              <button class="cascade" aria-label="Cascade windows">${icon(svg`
                <path d="M1.500 1.500H10.500V10H1.500ZM6 5.500H14.500V14.500H6Z" fill="none" stroke="#222" stroke-width="1.500"/>`, 17)}</button>
            </div>
            <div class="canvas">${this.windows()}</div>
          </div>
        </div>
        <div class="status"><span class="a"></span><span class="b"></span><span>Saved</span><span></span><span></span></div>
      </div>
      ${this.menus()}`;
  }
}
